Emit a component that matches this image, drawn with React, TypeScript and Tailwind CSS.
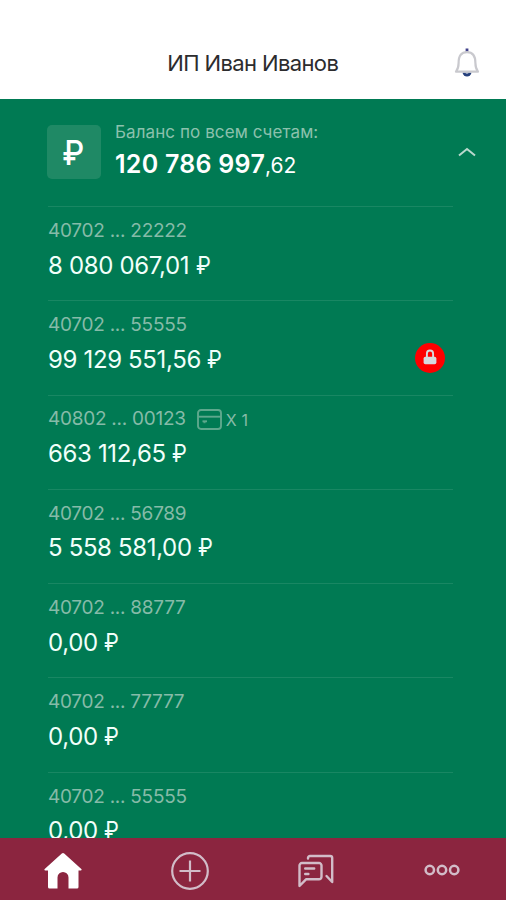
const accounts = [
  { id: 1, start: "40702", end: "22222", amount: "8 080 067,01", blocked: false, cards: 0 },
  { id: 2, start: "40702", end: "55555", amount: "99 129 551,56", blocked: true, cards: 0 },
  { id: 3, start: "40802", end: "00123", amount: "663 112,65", blocked: false, cards: 1 },
  { id: 4, start: "40702", end: "56789", amount: "5 558 581,00", blocked: false, cards: 0 },
  { id: 5, start: "40702", end: "88777", amount: "0,00", blocked: false, cards: 0 },
  { id: 6, start: "40702", end: "77777", amount: "0,00", blocked: false, cards: 0 },
  { id: 7, start: "40702", end: "55555", amount: "0,00", blocked: false, cards: 0 },
];

function BellIcon() {
  return (
    <svg width="26" height="30" viewBox="0 0 26 30" fill="none">
      <path d="M13 .5v3.5" stroke="#41418a" strokeWidth="2.8" />
      <path d="M8.6 24.5a4.4 4 0 0 0 8.800 0z" fill="#26407c" />
      <path d="M11.4 24.5a1.6 1.3 0 0 0 3.200 0z" fill="#b9c3d6" />
      <path
        d="M2 23.700c2-2.600 2.600-5 2.600-8.700C4.600 7.500 7.500 4.200 13 4.200s8.400 3.300 8.400 10.800c0 3.700.6 6.100 2.600 8.700z"
        fill="#fff"
        stroke="#c9c9ce"
        strokeWidth="2.200"
        strokeLinejoin="round"
      />
    </svg>
  );
}

function CardIcon() {
  return (
    <svg width="25" height="21" viewBox="0 0 25 21" fill="none" stroke="#5ea88d" strokeWidth="1.900">
      <rect x="1" y="1" width="23" height="19" rx="3" />
      <path d="M1 7.700h23" />
      <path d="M5.500 12.300h4.500" />
      <path d="M6.500 13.700h2" strokeWidth="1" />
    </svg>
  );
}

function LockBadge() {
  return (
    <div className="flex size-[30px] items-center justify-center rounded-full bg-[#fe0000]">
      <svg width="14" height="16" viewBox="0 0 14 16" className="-mt-[3px]">
        <path d="M3.900 8V4.700a3.100 3.200 0 0 1 6.200 0V8" fill="none" stroke="#d5dade" strokeWidth="1.900" />
        <rect x=".6" y="7.800" width="12.800" height="7.400" rx="1.800" fill="#d5dade" />
      </svg>
    </div>
  );
}

function TabBar() {
  return (
    <nav className="grid h-[62px] shrink-0 grid-cols-4 items-center bg-[#8b253f]">
      <div className="flex justify-center pt-1">
        <svg width="38" height="36" viewBox="0 0 38 36" fill="#fff">
          <path d="M17.800.6a1.800 1.800 0 0 1 2.400 0L37.300 16c.6.6.3 1.600-.6 1.600H34.500V34a1.500 1.500 0 0 1-1.500 1.500h-8.500V24.500a5.500 5.500 0 0 0-11 0v11H5.500A1.500 1.500 0 0 1 4 34V17.600H1.300c-.9 0-1.200-1-.6-1.600z" />
        </svg>
      </div>
      <div className="flex justify-center pt-1">
        <svg width="38" height="38" viewBox="0 0 38 38" fill="none" stroke="#d2bcc8" strokeWidth="2.200">
          <circle cx="19" cy="19" r="17.800" />
          <path d="M19 8.500v21M8.500 19h21" />
        </svg>
      </div>
      <div className="flex justify-center pt-1">
        <svg
          width="36"
          height="34"
          viewBox="0 0 36 34"
          fill="none"
          stroke="#d2bcc8"
          strokeWidth="2.400"
          strokeLinecap="round"
          strokeLinejoin="round"
        >
          <path d="M10 4.500V4a2 2 0 0 1 2-2h20.200a2 2 0 0 1 2 2v24l-5.700-6" />
          <path d="M1.500 32V11.500a2.500 2.500 0 0 1 2.500-2.500h17a2.500 2.500 0 0 1 2.500 2.500v11.300a2.500 2.500 0 0 1-2.500 2.500H8z" />
          <path d="M7.200 14.500h9M7.200 20h3.200" />
        </svg>
      </div>
      <div className="flex justify-center pt-[2px]">
        <svg width="36" height="12" viewBox="0 0 36 12" fill="none" stroke="#d2bcc8" strokeWidth="2.500">
          <circle cx="5.800" cy="6" r="4.200" />
          <circle cx="18" cy="6" r="4.200" />
          <circle cx="30.200" cy="6" r="4.200" />
        </svg>
      </div>
    </nav>
  );
}

export default function App() {
  return (
    <div className="h-[900px] w-full overflow-hidden bg-white font-['Inter',sans-serif]">
      <div className="flex h-full w-[505.500px] flex-col">
        <header className="grid h-[99px] shrink-0 grid-cols-[1fr_auto_1fr] items-center pt-[27px]">
          <div />
          <h1 className="text-[22px] tracking-[-0.620px] text-[#2c2c2e]">ИП Иван Иванов</h1>
          <div className="flex justify-end pr-[26px]">
            <BellIcon />
          </div>
        </header>

        <main className="min-h-0 flex-1 overflow-hidden bg-[#007a53]">
          {/* Общий баланс */}
          <section className="flex h-[107px] items-start pl-[47px] pr-[30px] pt-[26px]">
            <div className="flex size-[54px] items-center justify-center rounded-[5px] bg-[#1f8965] pr-[2px] text-white">
              <span className="scale-x-90 text-[34px] font-medium">₽</span>
            </div>
            <div className="ml-[14px] -mt-[3px] flex-1">
              <div className="text-[17px] leading-[20px] tracking-[0.080px] text-[#8cc1ad]">Баланс по всем счетам:</div>
              <div className="mt-[6px] whitespace-nowrap text-[25px] leading-[32px] font-semibold tracking-[0.260px] text-white">
                120 786 997<span className="text-[21px] font-normal tracking-[-0.1px]">,62</span>
              </div>
            </div>
            <svg width="18" height="10" viewBox="0 0 18 10" fill="none" className="mt-[22px]">
              <path d="M1 8.500l8-6.500 8 6.500" stroke="#b9d8cd" strokeWidth="2" />
            </svg>
          </section>

          {/* Счета */}
          {accounts.map((account) => (
            <div
              key={account.id}
              className="ml-[48px] mr-[53px] flex h-[94.300px] items-start justify-between border-t border-[#198763]"
            >
              <div>
                <div className="mt-[12px] flex h-[24px] items-center text-[19px] tracking-[-0.270px] text-[#86bba8]">
                  <span>{account.start} ... {account.end}</span>
                  {account.cards > 0 && (
                    <div className="ml-[11px] flex items-center gap-[4px] text-[16px] tracking-[0.2px]">
                      <CardIcon />
                      <span>X {account.cards}</span>
                    </div>
                  )}
                </div>
                <div className="mt-[6.500px] whitespace-nowrap text-[24px] leading-[32px] tracking-[-0.350px] text-[#f1fffa]">
                  {account.amount} <span className="inline-block origin-left scale-x-[0.88]">₽</span>
                </div>
              </div>
              {account.blocked && (
                <div className="mr-[8px] mt-[42px]">
                  <LockBadge />
                </div>
              )}
            </div>
          ))}
        </main>

        <TabBar />
      </div>
    </div>
  );
}
